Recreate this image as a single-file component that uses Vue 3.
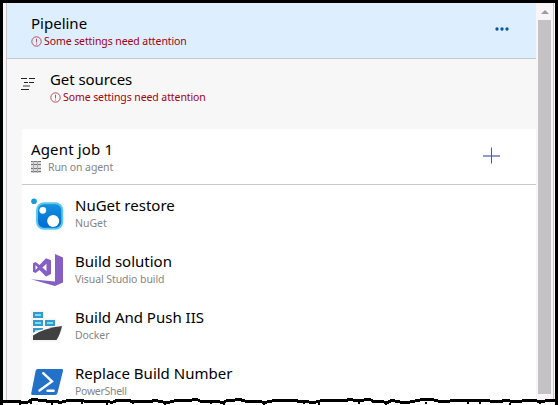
<script setup>
const tasks = [
  { icon: 'nuget', title: 'NuGet restore', type: 'NuGet' },
  { icon: 'vs', title: 'Build solution', type: 'Visual Studio build' },
  { icon: 'docker', title: 'Build And Push IIS', type: 'Docker' },
  { icon: 'ps', title: 'Replace Build Number', type: 'PowerShell' },
]
</script>

<template>
  <div class="frame">
    <main class="panel">
      <header class="row pipeline">
        <div class="text">
          <div class="title">Pipeline</div>
          <div class="warn"><svg width="11" height="11" viewBox="0 0 11 11"><circle cx="5.5" cy="5.5" r="4.7" /><path d="M5.5 2.7V6.4M5.5 7.5V8.5" /></svg><span>Some settings need attention</span></div>
        </div>
        <svg class="more" width="14" height="4" viewBox="0 0 14 4"><circle cx="2" cy="2" r="1.65" /><circle cx="7" cy="2" r="1.65" /><circle cx="12" cy="2" r="1.65" /></svg>
      </header>
      <section class="row sources">
        <svg class="branch" width="15" height="13" viewBox="0 0 15 13"><path d="M0 1.5H6M8 1.5H14M3 5.5H7M8 5.5H13" /><path class="soft" d="M2 9H9" /><path d="M0 12.5H8" /></svg>
        <div class="text">
          <div class="title t-sources">Get sources</div>
          <div class="warn"><svg width="11" height="11" viewBox="0 0 11 11"><circle cx="5.5" cy="5.5" r="4.7" /><path d="M5.5 2.7V6.4M5.5 7.5V8.5" /></svg><span>Some settings need attention</span></div>
        </div>
      </section>
      <section class="job">
        <div class="jobhead">
          <div class="text">
            <div class="title t-agent">Agent job 1</div>
            <div class="sub agent"><svg width="10" height="12" viewBox="0 0 10 12"><path class="box" d="M0 0H10V12H0Z" /><path d="M0 .5H10M0 3.5H10M0 7.5H10M0 10.5H10" /><path class="slot" d="M2.5 0V12M6.5 0V12" /></svg><span>Run on agent</span></div>
          </div>
          <svg class="plus" width="17" height="17" viewBox="0 0 17 17"><path class="h" d="M0 9H17" /><path class="v" d="M8.5 .5V16.5" /></svg>
        </div>
        <div v-for="t in tasks" :key="t.icon" class="task">
          <svg v-if="t.icon === 'nuget'" class="icon" width="34" height="34" viewBox="0 0 34 34">
            <defs><linearGradient id="ng" x1="0" y1="0" x2="0" y2="1"><stop offset="0" stop-color="#1593dc" /><stop offset="1" stop-color="#0068d2" /></linearGradient></defs>
            <circle cx="3" cy="3.3" r="2.8" fill="#139bd9" /><rect x="6" y="5.2" width="25.3" height="25.6" rx="7" fill="url(#ng)" stroke="#5bc7ef" stroke-width="2" />
            <circle cx="11.8" cy="12.3" r="3.4" fill="#fff" /><circle cx="22.2" cy="22.9" r="6" fill="#fff" />
          </svg>
          <svg v-else-if="t.icon === 'vs'" class="icon" width="34" height="34" viewBox="0 0 34 34" fill="#865fc5">
            <path d="M24 0L32 3.4V28.5L24 32L0 25.2L24 27.4Z" />
            <path fill-rule="evenodd" d="M15 4.2L20 6.2V20L15 22.4L8.5 16L4.5 19L2 17.8V9.2L4.5 8L8.5 11ZM15.5 9.7L11.4 13.5L15.5 17.2ZM4.5 11.1V15.9L6.7 13.5Z" />
          </svg>
          <svg v-else-if="t.icon === 'docker'" class="icon" width="34" height="34" viewBox="0 0 34 34">
            <path d="M0 0H13V8H25V16L31 14V20L26 32H0Z" fill="#f7f7f7" />
            <g fill="#78dfef" stroke="#3799c9" stroke-width="2"><rect x="3" y="3" width="8" height="4" /><rect x="3" y="11" width="8" height="4" /><rect x="15" y="11" width="8" height="4" /><rect x="3" y="19" width="8" height="5" /></g>
            <path d="M2 26V22.7Q12 18 31 16Q29 24 25 30H2Z" fill="#fff" />
            <path d="M2 25.5Q14 17.5 31 16Q29 25 25.5 30H2Z" fill="#414141" />
          </svg>
          <svg v-else class="icon" width="34" height="34" viewBox="0 0 34 34">
            <path d="M6.6 3H30.5Q32.4 3 32 5L26.5 27Q26 29 24 29H1.5Q-.2 29 .3 27L4.6 5Q5 3 6.6 3Z" fill="#2372c8" />
            <path d="M12.2 7.2L21 15.5L8.5 24.5M16.5 24.8H22.6" fill="none" stroke="#fff" stroke-width="2.4" stroke-linecap="round" />
          </svg>
          <div class="text">
            <div class="title">{{ t.title }}</div>
            <div class="sub" :class="'s-' + t.icon">{{ t.type }}</div>
          </div>
        </div>
      </section>
    </main>
    <aside class="scroll"><svg width="8" height="4" viewBox="0 0 8 4"><path d="M4 0L8 4H0Z" /></svg><div class="thumb"></div></aside>
    <svg class="torn" width="558" height="10" viewBox="0 395 558 10">
      <path class="paper" d="M-3 401L17 401 21 402 28 402 32 399.5 37 399.5 40 401 45 400.5 50 402 55 401 60 402.5 66 401 72 400 78 400 84 401 95 401 100 402 105 401 112 402.5 118 400 128 400 133 402 140 401 148 402 155 400.5 163 402 170 402 178 400 192 400 197 399.5 200 401 218 401 222 403 226 401 235 400 240 399.5 245 401 255 401 265 402.5 272 401 280 400 290 401 295 400 300 402 306 401 312 403 320 401 345 400.5 350 399.5 360 401 366 399.5 371 400 374 402 382 401 386 403 392 400.5 400 402 410 402 420 400 430 399 438 401 450 401 460 400.5 475 400.5 490 401 500 402 505 400 515 402 525 400.5 537 401 542 402 548 400 557 400V410H-3Z" />
      <path class="flecks" d="M20 403V405M31 402V404M52 403V405M82 402V404M107 403V405M133 403V404M165 403V405M211 402V404M224 403V405M264 403V405M304 402V404M319 403V405M359 402V404M386 403V405M426 402V404M468 402V404M480 402V404M510 403V405M540 402V404" />
    </svg>
  </div>
</template>

<style>
body { margin: 0; overflow: hidden; background: #fff; }
</style>
<style scoped>
* { box-sizing: border-box; }
svg { display: block; flex: none; }
.frame { position: relative; width: 558px; height: 405px; overflow: hidden; display: flex; border: 3px solid #000; border-bottom: 0; background: #f8f4f8; font-family: "Noto Sans", "Open Sans", sans-serif; color: #000; }
.panel { width: 530px; height: 402px; margin-left: 3px; flex: none; border-left: 1px solid #cbc6cc; background: #f7f7f7; overflow: hidden; }
.row { display: flex; }
.pipeline { height: 56px; padding: 9px 27px 0 24px; background: #ddeeff; border-bottom: 1px solid #c5c6cd; justify-content: space-between; }
.more { margin-top: 15px; fill: #07569f; }
.sources { height: 70px; padding: 9px 0 0 14px; }
.branch { margin-top: 9px; margin-right: 14px; fill: none; stroke: #222; stroke-width: 1; }
.branch .soft { stroke: #999; stroke-width: 2; }
.title { height: 23px; line-height: 23px; font-size: 15px; white-space: nowrap; }
.t-sources { letter-spacing: -.07px; }
.t-agent { letter-spacing: .15px; }
.warn, .sub { height: 13px; line-height: 13px; font-size: 10.5px; white-space: nowrap; }
.warn { display: flex; gap: 2px; color: #a4000f; letter-spacing: -.09px; }
.warn svg { margin-top: 1px; fill: none; stroke: #b5404b; stroke-width: .9; }
.sub { color: #858585; }
.s-vs, .s-docker { letter-spacing: -.08px; }
.s-ps { letter-spacing: -.3px; }
.job { margin-left: 15px; background: #fff; height: 275px; }
.jobhead { height: 56px; border-bottom: 1px solid #c9c9cb; padding: 9px 36px 0 9px; display: flex; justify-content: space-between; }
.agent { display: flex; gap: 7px; letter-spacing: -.1px; }
.agent svg { fill: none; stroke: #777; stroke-width: 1; }
.agent .box { fill: #ddd; stroke: none; }
.agent .slot { stroke: #aaa; }
.plus { margin-top: 9px; fill: none; }
.plus .h { stroke: #8f9bd0; stroke-width: 2; }
.plus .v { stroke: #4d55a5; stroke-width: 1; }
.task { height: 56px; padding: 9px 0 0 9px; display: flex; }
.icon { margin-right: 10px; margin-top: 4px; }
.scroll { width: 18px; height: 397px; flex: none; display: flex; flex-direction: column; align-items: center; background: #f8f4f8; border-right: 1px solid #c9c6ca; padding: 7px 1px 0 1px; box-shadow: 1px 0 #fff; }
.scroll svg { fill: #9e9b9f; }
.thumb { width: 13px; height: 374px; margin-top: 6px; background: #c5c2c6; }
.torn { position: absolute; left: -3px; top: 392px; }
.paper { fill: #fff; stroke: #000; stroke-width: 3; stroke-linejoin: bevel; shape-rendering: crispEdges; }
.flecks { stroke: #000; stroke-width: 2; fill: none; shape-rendering: crispEdges; }
</style>
